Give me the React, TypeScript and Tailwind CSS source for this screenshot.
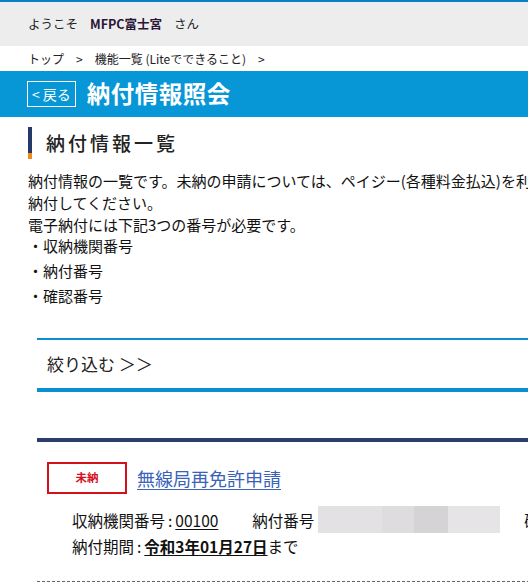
import React from "react";

const jp = "font-['Noto_Sans_CJK_JP','Noto_Sans',sans-serif]";

function Header() {
  return (
    <div>
      <div className="h-[2px] bg-[#0a7fc6]" />
      <div className="h-[44px] bg-[#ededed] flex items-center px-[28px] text-[12.5px] text-[#222]">
        <span>ようこそ</span>
        <span className="ml-[12px] font-bold text-[#2a1636]">MFPC富士宮</span>
        <span className="ml-[12px]">さん</span>
      </div>
      <div className="h-[25px] flex items-center px-[28px] text-[12px] text-[#222] gap-[12px]">
        <span>トップ</span>
        <span>&gt;</span>
        <span>機能一覧 (Liteでできること)</span>
        <span>&gt;</span>
      </div>
      <div className="h-[46px] bg-[#0796d6] flex items-center px-[27px] gap-[11px]">
        <button className="h-[26px] px-[4px] border border-white text-white text-[14px] leading-none flex items-center">
          <span className="mr-[3px]">&lt;</span>戻る
        </button>
        <h1 className="text-white text-[23.5px] font-bold tracking-[0.5px]">納付情報照会</h1>
      </div>
    </div>
  );
}

function Intro() {
  return (
    <div className="px-[28px] pt-[10px]">
      <div className="flex items-center h-[32px]">
        <div className="w-[4px] h-[32px] flex flex-col">
          <div className="flex-1 bg-[#263a6a]" />
          <div className="h-[6px] bg-[#ee8a1c]" />
        </div>
        <h2 className="ml-[14px] text-[19px] tracking-[3px] text-[#222] font-medium">納付情報一覧</h2>
      </div>
      <div className="mt-[11px] text-[15px] text-[#111] leading-[22px] whitespace-nowrap">
        <p>納付情報の一覧です。未納の申請については、ペイジー(各種料金払込)を利用して電子納付できます。</p>
        <p>納付してください。</p>
        <p>電子納付には下記3つの番号が必要です。</p>
        <ul className="mt-[-3px]">
          <li className="h-[25px] leading-[25px]">・収納機関番号</li>
          <li className="h-[25px] leading-[25px]">・納付番号</li>
          <li className="h-[25px] leading-[25px]">・確認番号</li>
        </ul>
      </div>
    </div>
  );
}

function Filter() {
  return (
    <div className="ml-[37px] mt-[30px]">
      <div className="h-[2px] bg-[#0b8fd3]" />
      <div className="h-[48px] flex items-center px-[10px] text-[17px] text-[#222]">
        絞り込む ＞＞
      </div>
      <div className="h-[4px] bg-[#0b8fd3]" />
    </div>
  );
}

function PaymentItem() {
  return (
    <div className="ml-[37px] mt-[46px]">
      <div className="h-[4px] bg-[#2b3d6b]" />
      <div className="flex items-center mt-[20px] ml-[10px]">
        <div className="w-[80px] h-[32px] border-2 border-[#d4101c] flex items-center justify-center text-[11.5px] font-bold text-[#d4101c]">
          未納
        </div>
        <a href="#" className="ml-[10px] text-[18px] text-[#3a62b8] underline underline-offset-[3px]">
          無線局再免許申請
        </a>
      </div>
      <div className="ml-[35px] mt-[12px] text-[15.5px] text-[#111] leading-[26px] whitespace-nowrap">
        <div className="flex items-center">
          <span>
            収納機関番号<span className="mx-[3px]">:</span>
            <span className="underline underline-offset-[2px]">00100</span>
          </span>
          <span className="ml-[34px]">納付番号</span>
          <div className="ml-[4px] w-[182px] h-[27px] flex">
            <div className="w-[64px] bg-[#e3e1e4]" />
            <div className="w-[32px] bg-[#dedcdf]" />
            <div className="w-[34px] bg-[#d6d3d7]" />
            <div className="flex-1 bg-[#e6e4e7]" />
          </div>
          <span className="ml-[24px]">確認番号</span>
        </div>
        <div>
          納付期間<span className="mx-[3px]">:</span>
          <span className="font-bold underline underline-offset-[2px]">令和3年01月27日</span>まで
        </div>
      </div>
      <div className="mt-[22px] border-t border-dashed border-[#666]" />
    </div>
  );
}

export default function App() {
  return (
    <div className={`w-[528px] h-[585px] overflow-hidden bg-white ${jp}`}>
      <div className="w-[820px]">
        <Header />
        <Intro />
        <Filter />
        <PaymentItem />
      </div>
    </div>
  );
}
